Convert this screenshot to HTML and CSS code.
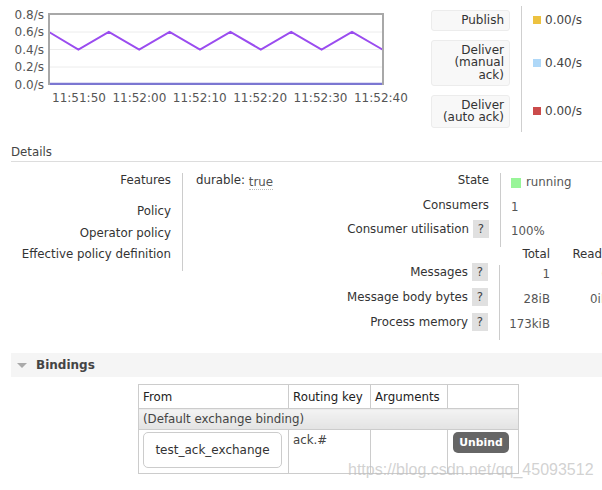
FILE: index.html
```html
<!DOCTYPE html>
<html>
<head>
<meta charset="utf-8">
<link rel="stylesheet" href="styles.css">
</head>
<body>
<div class="page">
  <section class="top">
    <div class="chart">
      <div class="yaxis">
        <span>0.8/s</span><span>0.6/s</span><span>0.4/s</span><span>0.2/s</span><span>0.0/s</span>
      </div>
      <div class="plot">
        <svg width="336" height="72" viewBox="0 0 336 72">
          <line x1="0" y1="19" x2="336" y2="19" stroke="#ececec" stroke-width="1"/>
          <line x1="0" y1="36.5" x2="336" y2="36.5" stroke="#ececec" stroke-width="1"/>
          <line x1="0" y1="54" x2="336" y2="54" stroke="#ececec" stroke-width="1"/>
          <polyline fill="none" stroke="#9a4cef" stroke-width="2" stroke-linejoin="miter"
            points="1,19 30.4,36.5 60.8,19 91.2,36.5 121.6,19 152,36.5 182.4,19 212.8,36.5 243.2,19 273.6,36.5 304,19 334.4,36.5"/>
          <line x1="1" y1="71" x2="335" y2="71" stroke="#7b77d2" stroke-width="2.5"/>
          <path d="M1,72 V1 H335 V72" fill="none" stroke="#a8a8a8" stroke-width="2"/>
        </svg>
      </div>
      <div class="xaxis">
        <span>11:51:50</span><span>11:52:00</span><span>11:52:10</span><span>11:52:20</span><span>11:52:30</span><span>11:52:40</span>
      </div>
    </div>
    <div class="legend">
      <div class="sep"></div>
      <div class="lg-label r2">Publish</div>
      <div class="lg-val r2"><i class="sw yellow"></i>0.00/s</div>
      <div class="lg-label r3">Deliver<br>(manual<br>ack)</div>
      <div class="lg-val r3"><i class="sw blue"></i>0.40/s</div>
      <div class="lg-label r4">Deliver<br>(auto ack)</div>
      <div class="lg-val r4"><i class="sw red"></i>0.00/s</div>
    </div>
  </section>

  <h2 class="section-title">Details</h2>

  <div class="details">
    <div class="kv kv-left">
      <div class="k">Features</div>
      <div class="v"><span class="attr">durable:</span> <abbr class="val">true</abbr></div>
      <div class="k">Policy</div>
      <div class="v"></div>
      <div class="k">Operator policy</div>
      <div class="v"></div>
      <div class="k">Effective policy definition</div>
      <div class="v"></div>
    </div>
    <div class="right">
      <div class="kv kv-state">
        <div class="k">State</div>
        <div class="v val"><i class="sw green"></i>running</div>
        <div class="k">Consumers</div>
        <div class="v val">1</div>
        <div class="k">Consumer utilisation <span class="help">?</span></div>
        <div class="v val">100%</div>
      </div>
      <div class="msgs">
        <div class="mh"></div>
        <div class="mh num">Total</div>
        <div class="mh num">Ready</div>
        <div class="k">Messages <span class="help">?</span></div>
        <div class="mv first">1</div>
        <div class="mv">0</div>
        <div class="k">Message body bytes <span class="help">?</span></div>
        <div class="mv first">28iB</div>
        <div class="mv">0iB</div>
        <div class="k">Process memory <span class="help">?</span></div>
        <div class="mv first">173kiB</div>
        <div class="mv"></div>
      </div>
    </div>
  </div>

  <div class="band"><span class="tri"></span><span class="band-title">Bindings</span></div>

  <table class="bindings">
    <colgroup><col class="c1"><col class="c2"><col class="c3"><col class="c4"></colgroup>
    <thead>
      <tr><th>From</th><th>Routing key</th><th>Arguments</th><th></th></tr>
    </thead>
    <tbody>
      <tr class="default-row"><td colspan="4">(Default exchange binding)</td></tr>
      <tr class="data-row">
        <td><span class="exch">test_ack_exchange</span></td>
        <td class="rk">ack.#</td>
        <td></td>
        <td><button class="unbind">Unbind</button></td>
      </tr>
    </tbody>
  </table>

  <div class="watermark">https://blog.csdn.net/qq_45093512</div>
</div>
</body>
</html>
```

FILE: styles.css
```css
* { box-sizing: border-box; }
html, body { margin: 0; padding: 0; }
body {
  width: 602px;
  height: 490px;
  overflow: hidden;
  background: #fff;
  font-family: "DejaVu Sans", Verdana, sans-serif;
  font-size: 11.8px;
  line-height: 14px;
  color: #333;
}
.page { position: relative; width: 602px; height: 490px; overflow: hidden; }

/* ---------- top: chart + legend ---------- */
.top { display: flex; height: 137px; }
.chart {
  width: 431px;
  display: grid;
  grid-template-columns: 48px 336px;
  grid-template-rows: 85px auto;
}
.yaxis {
  grid-column: 1; grid-row: 1;
  display: flex; flex-direction: column; align-items: flex-end;
  padding-top: 7px; padding-right: 4px;
  color: #555;
  font-size: 12px;
}
.yaxis span { height: 17.4px; line-height: 17.4px; }
.plot { grid-column: 2; grid-row: 1; margin-top: 13px; height: 72px; }
.plot svg { display: block; }
.xaxis {
  grid-column: 2; grid-row: 2;
  display: grid; grid-template-columns: repeat(6, 60.4px);
  margin-top: 6px; padding-left: 4px;
  color: #555;
  font-size: 12px;
  white-space: nowrap;
}

.legend {
  display: grid;
  grid-template-columns: 79px 23px auto;
  grid-template-rows: 0 auto auto auto 0;
  row-gap: 9px;
  margin-top: 1px;
  height: 136px;
}
.sep { grid-column: 2; grid-row: 1 / 6; margin: 5px 11px; width: 1px; background: #cfcfcf; }
.lg-label {
  grid-column: 1;
  background: #f8f8f8;
  border: 1px solid #ececec;
  border-radius: 3px;
  padding: 3px 5px;
  line-height: 12.5px;
  text-align: right;
  color: #333;
  font-size: 12px;
}
.lg-val { grid-column: 3; align-self: center; display: flex; align-items: center; gap: 4px; color: #444; font-size: 12px; }
.r2 { grid-row: 2; }
.r3 { grid-row: 3; }
.r4 { grid-row: 4; }
.sw { display: inline-block; width: 8px; height: 8px; }
.yellow { background: #edc240; }
.blue { background: #afd8f8; }
.red { background: #cb4b4b; }
.green { background: #98f598; width: 10px; height: 10px; }

/* ---------- details ---------- */
.section-title {
  margin: 8px 0 0 11px;
  padding: 0 0 2px 0;
  font-size: 11.8px;
  font-weight: normal;
  line-height: 14px;
  color: #444;
  border-bottom: 1px solid #ddd;
}
.details { display: flex; margin-top: 11px; }
.kv { display: grid; }
.kv .k { text-align: right; padding-right: 11px; color: #333; }
.kv .v { border-left: 1px solid #ccc; }
.kv-left { margin-left: 11px; grid-template-columns: 171px 148px; grid-template-rows: 31px 22px 21px 24px; }
.kv-left .v { padding-left: 13px; }
.attr { color: #333; }
abbr.val { text-decoration: none; border-bottom: 1px dotted #bbb; color: #555; position: relative; top: 2px; }
.val { color: #555; }
.kv-state { grid-template-columns: 170px auto; grid-template-rows: 25px 24px 25px; }
.kv-state .v { padding-left: 10px; padding-top: 2px; display: flex; align-items: flex-start; }
.kv-state .v .sw { margin-top: 3px; margin-right: 5px; }
.kv .k, .msgs .k { display: flex; justify-content: flex-end; align-items: center; align-self: start; gap: 4px; height: 14px; }
.help {
  display: inline-block;
  width: 16px; height: 18px; line-height: 18px;
  background: #e0e0e0;
  text-align: center;
  color: #444;
  flex: none;
}
.msgs { display: grid; grid-template-columns: 169px 51px 59px; grid-template-rows: 18px 25px 25px 25px; }
.msgs .k { padding-right: 11px; color: #333; }
.mh { color: #333; }
.num { text-align: right; }
.mv { text-align: right; padding-top: 2px; color: #555; }
.mv.first { border-left: 1px solid #ccc; }

/* ---------- bindings ---------- */
.band {
  margin: 13px 0 0 11px;
  height: 24px;
  background: #f5f5f5;
  display: flex; align-items: center;
}
.tri {
  width: 0; height: 0;
  border-left: 5px solid transparent;
  border-right: 5px solid transparent;
  border-top: 5px solid #aaa;
  margin-left: 6px; margin-right: 9px;
}
.band-title { font-weight: bold; color: #444; font-size: 12px; }

.bindings {
  margin: 7px 0 0 138px;
  border-collapse: collapse;
  table-layout: fixed;
  width: 380px;
}
.c1 { width: 150px; } .c2 { width: 82px; } .c3 { width: 77px; } .c4 { width: 71px; }
.bindings th, .bindings td { border: 1px solid #ccc; }
.bindings th { height: 24px; padding: 0 4px; text-align: left; font-weight: normal; color: #222; }
.default-row td {
  height: 21px; padding: 0 4px; color: #444;
  background: linear-gradient(#f3f3f3, #e3e3e3);
}
.data-row td { height: 44px; vertical-align: top; padding: 2px 4px; color: #444; }
.data-row td.rk { padding-top: 3px; }
.exch {
  display: block;
  width: 139px; height: 36px; line-height: 34px;
  border: 1px solid #ccc; border-radius: 5px;
  text-align: center; color: #333; background: #fff;
  font-size: 12px;
}
.unbind {
  font-family: "DejaVu Sans", Verdana, sans-serif;
  font-size: 10.8px; font-weight: bold;
  line-height: 15px;
  color: #fff;
  background: #666;
  border: none;
  border-radius: 5px;
  padding: 3px 6px;
  margin-left: 1px;
  width: 56px;
}

.watermark {
  position: absolute;
  left: 348px; top: 461px;
  font-family: "Liberation Sans", Arial, sans-serif;
  font-size: 16px; line-height: 18px;
  color: rgba(190, 190, 190, 0.7);
  white-space: nowrap;
}
```
